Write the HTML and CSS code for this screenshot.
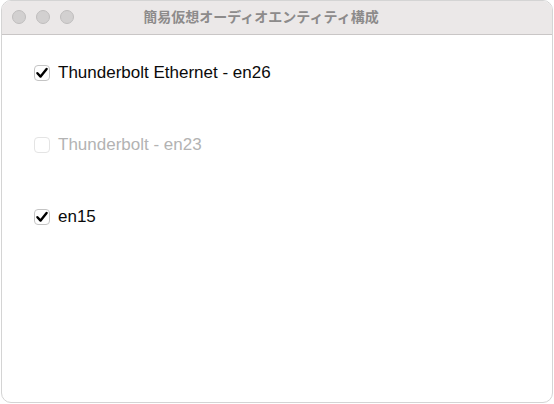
FILE: index.html
```html
<!DOCTYPE html>
<html lang="ja">
<head>
<meta charset="utf-8">
<link rel="stylesheet" href="styles.css">
</head>
<body>
<div class="window">
  <div class="titlebar">
    <div class="lights">
      <span class="light"></span>
      <span class="light"></span>
      <span class="light"></span>
    </div>
    <div class="title">簡易仮想オーディオエンティティ構成</div>
  </div>
  <div class="content">
    <label class="row">
      <span class="box checked">
        <svg viewBox="0 0 16 16" width="16" height="16"><path d="M3.4 8.2 L6.6 11.6 L12.6 3.9" fill="none" stroke="#000" stroke-width="2.4" stroke-linecap="round" stroke-linejoin="round"/></svg>
      </span>
      <span class="label">Thunderbolt Ethernet - en26</span>
    </label>
    <label class="row disabled">
      <span class="box"></span>
      <span class="label">Thunderbolt - en23</span>
    </label>
    <label class="row">
      <span class="box checked">
        <svg viewBox="0 0 16 16" width="16" height="16"><path d="M3.4 8.2 L6.6 11.6 L12.6 3.9" fill="none" stroke="#000" stroke-width="2.4" stroke-linecap="round" stroke-linejoin="round"/></svg>
      </span>
      <span class="label">en15</span>
    </label>
  </div>
</div>
</body>
</html>
```

FILE: styles.css
```css
html, body {
  margin: 0;
  padding: 0;
  background: #ffffff;
}
body {
  width: 554px;
  height: 404px;
  overflow: hidden;
  font-family: "Liberation Sans", Arial, "Noto Sans CJK JP", sans-serif;
}
.window {
  box-sizing: border-box;
  width: 552px;
  height: 403px;
  margin-left: 1px;
  border: 1px solid #d4d4d4;
  border-radius: 10px;
  overflow: hidden;
  background: #ffffff;
  display: flex;
  flex-direction: column;
}
.titlebar {
  position: relative;
  height: 33px;
  flex: none;
  background: #ebe8e8;
  border-bottom: 1px solid #c9c6c6;
  display: flex;
  align-items: center;
  justify-content: center;
}
.lights {
  position: absolute;
  left: 10px;
  top: 9px;
  display: flex;
  gap: 10px;
}
.light {
  box-sizing: border-box;
  width: 14px;
  height: 14px;
  border-radius: 50%;
  background: #d2d0d0;
  border: 1px solid #bfbdbd;
}
.title {
  font-family: "Noto Sans CJK JP", sans-serif;
  font-weight: 700;
  font-size: 14px;
  color: #8d8b8b;
  margin-right: 32px;
  margin-top: -3px;
}
.content {
  padding: 26px 0 0 32px;
  display: flex;
  flex-direction: column;
  gap: 48px;
}
.row {
  display: flex;
  align-items: center;
  height: 24px;
  gap: 8px;
}
.box {
  box-sizing: border-box;
  width: 16px;
  height: 16px;
  border: 1px solid #c4c4c4;
  border-radius: 4px;
  background: #fff;
  display: flex;
  align-items: center;
  justify-content: center;
}
.box svg {
  display: block;
  flex: none;
}
.label {
  font-size: 17px;
  color: #0a0a0a;
}
.disabled .box {
  border-color: #e4e4e4;
}
.disabled .label {
  color: #b3b3b3;
}
```
